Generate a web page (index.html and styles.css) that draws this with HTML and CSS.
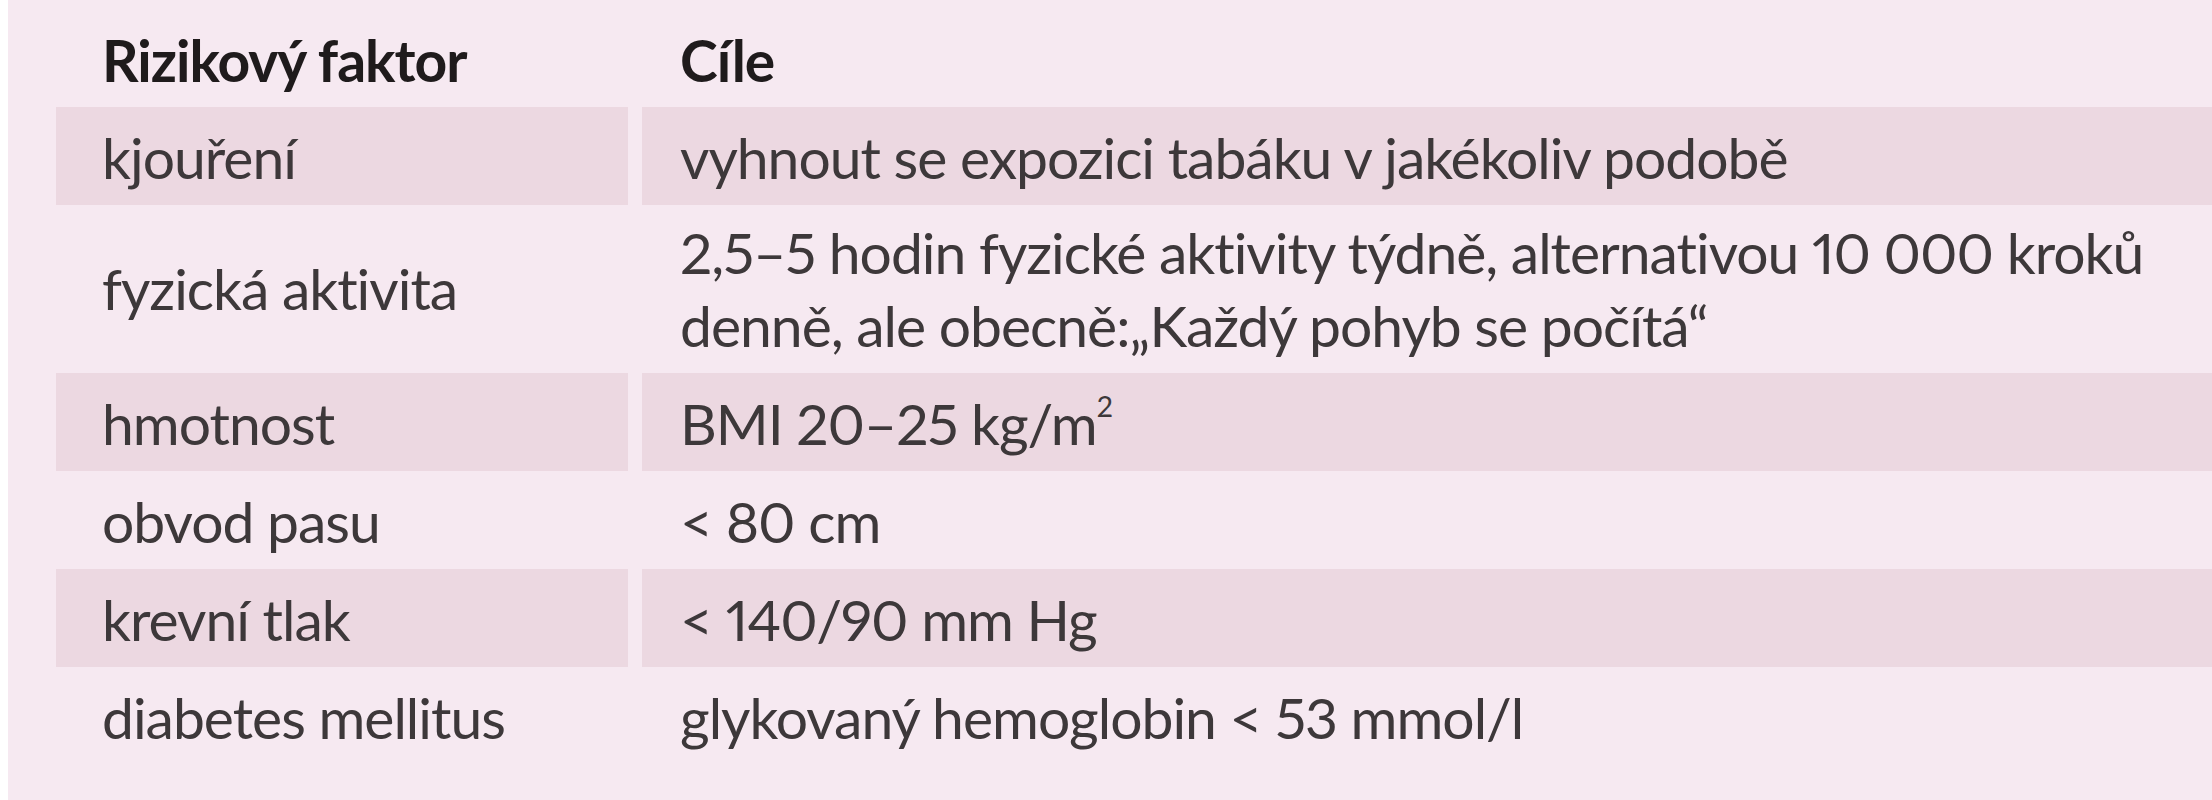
FILE: index.html
```html
<!DOCTYPE html>
<html lang="cs">
<head>
<meta charset="utf-8">
<title>Rizikové faktory</title>
<link rel="stylesheet" href="styles.css">
</head>
<body>
<div class="page">
  <div class="table">
    <div class="row head">
      <div class="cell c1">Rizikový faktor</div>
      <div class="cell c2">Cíle</div>
    </div>
    <div class="row shaded">
      <div class="cell c1">kjouření</div>
      <div class="cell c2">vyhnout se expozici tabáku v jakékoliv podobě</div>
    </div>
    <div class="row tall">
      <div class="cell c1 mid">fyzická aktivita</div>
      <div class="cell c2">2,5–5 hodin fyzické aktivity týdně, alternativou 10 000 kroků<br>denně, ale obecně:„Každý pohyb se počítá“</div>
    </div>
    <div class="row shaded">
      <div class="cell c1">hmotnost</div>
      <div class="cell c2">BMI 20–25 kg/m<sup class="sup">2</sup></div>
    </div>
    <div class="row">
      <div class="cell c1">obvod pasu</div>
      <div class="cell c2">&lt; 80 cm</div>
    </div>
    <div class="row shaded">
      <div class="cell c1">krevní tlak</div>
      <div class="cell c2">&lt; 140/90 mm Hg</div>
    </div>
    <div class="row">
      <div class="cell c1">diabetes mellitus</div>
      <div class="cell c2">glykovaný hemoglobin &lt; 53 mmol/l</div>
    </div>
  </div>
</div>
</body>
</html>
```
FILE: styles.css
```css
html, body {
  margin: 0;
  padding: 0;
  background: #ffffff;
}
.page {
  margin-left: 8px;
  min-height: 800px;
  background: #f6e9f1;
  overflow: hidden;
}
.table {
  padding-left: 48px;
  font-family: Lato, "Liberation Sans", sans-serif;
  font-size: 57px;
  line-height: 73px;
  letter-spacing: -1px;
  font-variant-ligatures: none;
  font-variant-numeric: proportional-nums;
  color: #3d383a;
}
.row {
  display: grid;
  grid-template-columns: 572px 1fr;
  column-gap: 14px;
  height: 98px;
}
.cell {
  padding-top: 14px;
  white-space: nowrap;
}
.c1 { padding-left: 46px; }
.c2 { padding-left: 38px; }
.head {
  height: 107px;
  font-weight: 700;
  color: #1f1b1c;
}
.head .cell { padding-top: 24px; }
.shaded .cell { background: #ecd8e1; }
.tall { height: 168px; }
.tall .cell { padding-top: 11px; }
.tall .mid { padding-top: 47px; }
.sup {
  font-size: 0.5em;
  line-height: 0;
  vertical-align: 1em;
}
```
